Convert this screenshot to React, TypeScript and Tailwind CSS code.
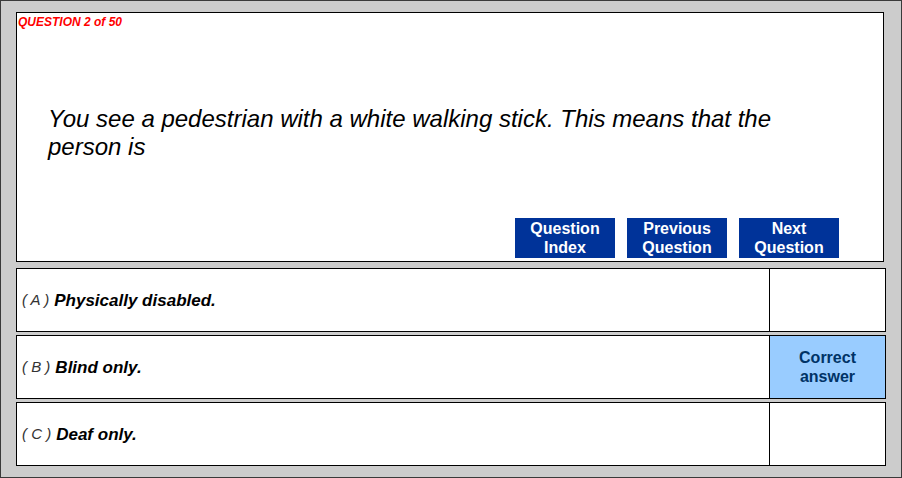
export default function App() {
  const font = { fontFamily: '"Liberation Sans", Arial, sans-serif' };
  const answers = [
    { l: "A", t: "Physically disabled.", c: false },
    { l: "B", t: "Blind only.", c: true },
    { l: "C", t: "Deaf only.", c: false },
  ];
  return (
    <div
      className="w-[902px] h-[478px] border border-[#3a3a3a] bg-[#cccccc] pl-[15px] pt-[11px] box-border"
      style={font}
    >
      <div className="w-[868px] h-[250px] border border-black bg-white flex flex-col">
        <div className="pl-[1px] pt-[2px] text-[12px] leading-[14px] font-bold italic text-[#ff0000]">
          QUESTION 2 of 50
        </div>
        <div className="mt-[76px] pl-[31px] pr-[95px] text-[24px] leading-[28px] italic text-black">
          You see a pedestrian with a white walking stick. This means that the person is
        </div>
        <div className="mt-auto flex justify-end gap-[12px] pr-[44px] pb-[3px]">
          {[["Question", "Index"], ["Previous", "Question"], ["Next", "Question"]].map(([a, b]) => (
            <div
              key={a}
              className="w-[100px] h-[40px] bg-[#003399] text-white font-bold text-[16px] leading-[19px] flex flex-col items-center justify-center"
            >
              <span>{a}</span>
              <span>{b}</span>
            </div>
          ))}
        </div>
      </div>
      <div className="mt-[6px] flex flex-col gap-[3px] w-[870px]">
        {answers.map((a) => (
          <div key={a.l} className="h-[64px] border border-black bg-white flex">
            <div className="flex-1 flex items-center pl-[5px] pt-[1px] text-black">
              <span className="text-[15px] italic font-normal text-[#333]">( {a.l} )</span>
              <span className="ml-[5px] text-[17px] font-bold italic">{a.t}</span>
            </div>
            <div
              className={
                "w-[116px] border-l border-black flex items-center justify-center text-center font-bold text-[16px] leading-[19px] text-[#003366] " +
                (a.c ? "bg-[#99ccff]" : "bg-white")
              }
            >
              {a.c ? (
                <span>
                  Correct
                  <br />
                  answer
                </span>
              ) : null}
            </div>
          </div>
        ))}
      </div>
    </div>
  );
}
